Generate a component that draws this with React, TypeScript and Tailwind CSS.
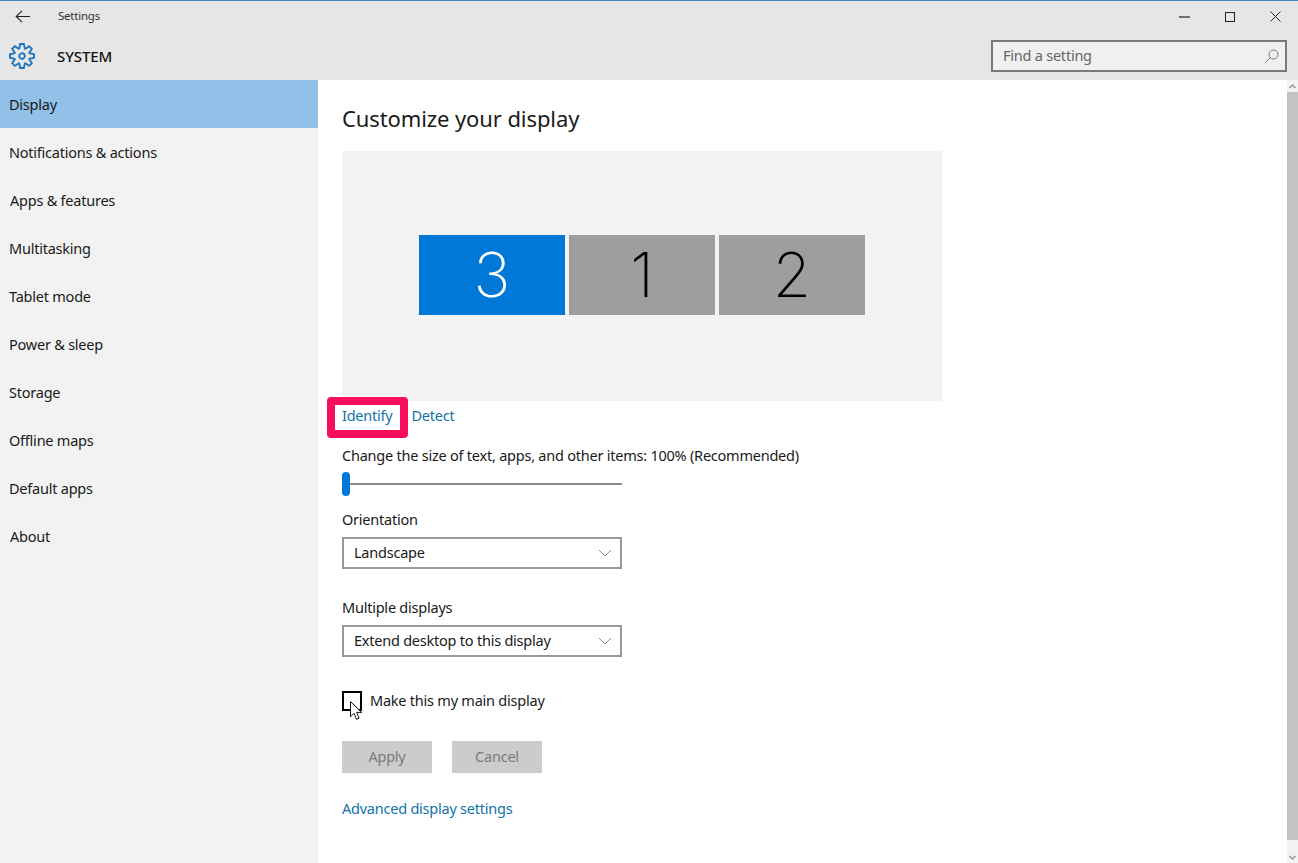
import React from 'react';
import { VscSettingsGear } from 'react-icons/vsc';

const navItems = [
  { label: 'Display', active: true },
  { label: 'Notifications & actions' },
  { label: 'Apps & features', shift: true },
  { label: 'Multitasking' },
  { label: 'Tablet mode' },
  { label: 'Power & sleep' },
  { label: 'Storage' },
  { label: 'Offline maps' },
  { label: 'Default apps' },
  { label: 'About', shift: true },
];

const Chevron = () => (
  <svg width="14" height="8" viewBox="0 0 14 8" fill="none" stroke="#8a8a8a" strokeWidth="1">
    <path d="M1 1l6 6 6-6" />
  </svg>
);

const Dropdown = ({ value }: { value: string }) => (
  <div className="flex h-[32px] w-[280px] items-center justify-between border-2 border-[#999999] pl-[10px] pr-[8px] text-[#1a1a1a]">
    <span className="pb-[2px]">{value}</span>
    <Chevron />
  </div>
);

const Monitor = ({ n, active }: { n: number; active?: boolean }) => (
  <div
    className={`flex h-[80px] w-[146px] items-center justify-center font-['Inter'] text-[62px] font-extralight leading-none tracking-normal ${
      active ? 'bg-[#0078d7] text-white' : 'bg-[#9e9e9e] text-black'
    }`}
  >
    {n}
  </div>
);

const App: React.FC = () => {
  return (
    <div className="flex h-[863px] w-[1298px] flex-col overflow-hidden bg-white font-['Noto_Sans','Open_Sans',sans-serif] text-[14.5px] leading-[20px] tracking-[-0.23px] text-[#1a1a1a]">
      {/* Title bar */}
      <div className="flex h-[32px] items-center border-t border-[#3f88bf] bg-[#e6e6e6]">
        <div className="flex w-[58px] justify-start pl-[15px]">
          <svg width="15" height="13" viewBox="0 0 15 13" fill="none" stroke="#222" strokeWidth="1.1">
            <path d="M15 6.5H1M7 .8L1.2 6.5 7 12.2" />
          </svg>
        </div>
        <span className="pb-[2px] text-[11.5px] text-[#333333]">Settings</span>
        <div className="ml-auto flex items-center gap-[35px] pr-[17px]">
          <svg width="11" height="2" viewBox="0 0 11 2"><path d="M0 1h11" stroke="#222" strokeWidth="1.2" /></svg>
          <svg width="10" height="10" viewBox="0 0 10 10" fill="none"><rect x=".5" y=".5" width="9" height="9" stroke="#222" /></svg>
          <svg width="11" height="11" viewBox="0 0 11 11" fill="none" stroke="#222" strokeWidth="1"><path d="M.5.5l10 10M10.5.5l-10 10" /></svg>
        </div>
      </div>

      {/* Header */}
      <div className="flex h-[48px] items-center bg-[#e6e6e6]">
        <div className="w-[57px] pl-[9px]">
          <VscSettingsGear size={26} className="text-[#1f76bd]" />
        </div>
        <span className="text-[15px] font-medium tracking-[-0.1px] text-[#111111]">SYSTEM</span>
        <div className="ml-auto mr-[11px] flex h-[32px] w-[296px] items-center justify-between border-2 border-[#7a7a7a] bg-[#f0f0f0] pl-[10px] pr-[6px] text-[#666666]">
          <span className="pb-[2px]">Find a setting</span>
          <svg width="14" height="14" viewBox="0 0 14 14" fill="none" stroke="#777" strokeWidth="1">
            <circle cx="8.5" cy="5.5" r="4.5" />
            <path d="M5.2 8.8L.7 13.3" />
          </svg>
        </div>
      </div>

      <div className="flex min-h-0 flex-1">
        {/* Sidebar */}
        <nav className="w-[318px] shrink-0 bg-[#f2f2f2]">
          {navItems.map((item) => (
            <div
              key={item.label}
              className={`flex h-[48px] items-center ${item.shift ? 'pl-[10px]' : 'pl-[9px]'} ${item.active ? 'bg-[#91c0e8]' : ''}`}
            >
              {item.label}
            </div>
          ))}
        </nav>

        {/* Content */}
        <main className="relative min-w-0 flex-1 pl-[24px] pt-[22px]">
          <h1 className="h-[32px] text-[22px] font-normal leading-[32px] tracking-[-0.1px] text-[#1a1a1a]">Customize your display</h1>

          <div className="mt-[17px] flex h-[250px] w-[600px] items-center justify-center gap-[4px] bg-[#f3f3f3] pb-[2px]">
            <Monitor n={3} active />
            <Monitor n={1} />
            <Monitor n={2} />
          </div>

          <div className="flex h-[30px] items-center gap-[19px] pb-[2px] text-[#0f73a8]">
            <span>Identify</span>
            <span>Detect</span>
          </div>
          {/* Annotation around the link */}
          <div className="pointer-events-none absolute left-[9px] top-[317px] h-[41px] w-[81px] rounded-[4px] border-[8px] border-[#f70f5c]" />

          <div className="mt-[15px] h-[20px] leading-[18px]">Change the size of text, apps, and other items: 100% (Recommended)</div>

          <div className="relative mt-[6px] flex h-[24px] w-[280px] items-center">
            <div className="h-[2px] w-full bg-[#8c8c8c]" />
            <div className="absolute left-0 top-0 h-[24px] w-[8px] rounded-[4px] bg-[#0078d7]" />
          </div>

          <div className="mt-[14px] h-[20px] leading-[18px]">Orientation</div>
          <div className="mt-[7px]">
            <Dropdown value="Landscape" />
          </div>

          <div className="mt-[29px] h-[20px] leading-[18px]">Multiple displays</div>
          <div className="mt-[7px]">
            <Dropdown value="Extend desktop to this display" />
          </div>

          <div className="relative mt-[34px] flex h-[20px] items-center gap-[8px]">
            <div className="h-[20px] w-[20px] border-2 border-black" />
            <span className="pb-[2px]">Make this my main display</span>
            {/* Mouse pointer */}
            <svg className="absolute left-[8px] top-[10px]" width="13" height="20" viewBox="0 0 13 20">
              <path d="M.5.5v15.2l3.6-3.4 2.4 6 2.6-1.1-2.5-5.8h5z" fill="#fff" stroke="#111" strokeWidth="1" />
            </svg>
          </div>

          <div className="mt-[30px] flex gap-[20px]">
            <div className="flex h-[32px] w-[90px] items-center justify-center bg-[#cccccc] pb-[2px] text-[#7a7a7a]">Apply</div>
            <div className="flex h-[32px] w-[90px] items-center justify-center bg-[#cccccc] pb-[2px] text-[#7a7a7a]">Cancel</div>
          </div>

          <div className="mt-[26px] h-[20px] leading-[18px] text-[#0f73a8]">Advanced display settings</div>

          {/* Scrollbar */}
          <div className="absolute bottom-0 right-0 top-0 flex w-[11px] flex-col bg-[#f2f2f2]">
            <div className="flex h-[12px] items-center justify-center">
              <svg width="7" height="5" viewBox="0 0 7 5" fill="none" stroke="#8a8a8a" strokeWidth="1.2"><path d="M.5 4l3-3 3 3" /></svg>
            </div>
            <div className="flex-1 bg-[#c2c3c4]" />
            <div className="flex h-[23px] items-end justify-center pb-[3px]">
              <svg width="7" height="5" viewBox="0 0 7 5" fill="none" stroke="#8a8a8a" strokeWidth="1.2"><path d="M.5 1l3 3 3-3" /></svg>
            </div>
          </div>
        </main>
      </div>
    </div>
  );
};

export default App;
